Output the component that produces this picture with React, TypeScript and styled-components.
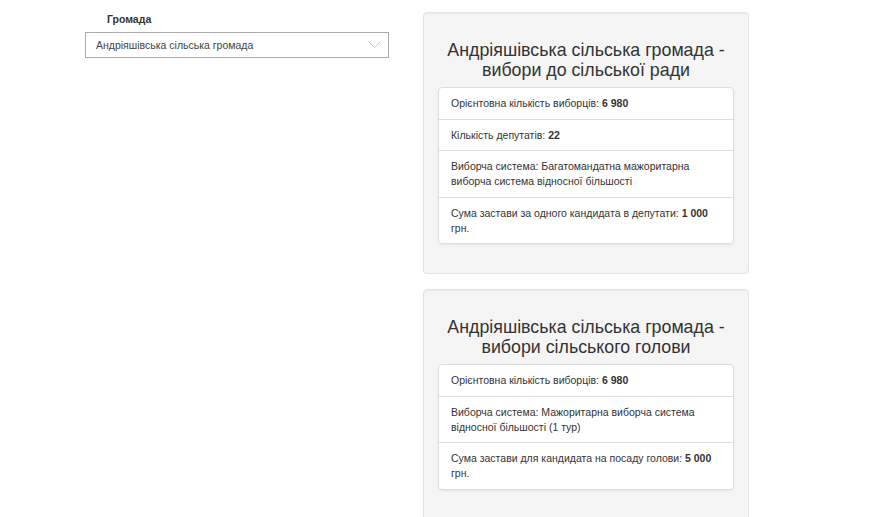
import styled, { createGlobalStyle } from 'styled-components';

interface Fact {
  label: string;
  value?: string;
  unit?: string;
}

interface Election {
  title: string;
  facts: Fact[];
}

const elections: Election[] = [
  {
    title: 'Андріяшівська сільська громада - вибори до сільської ради',
    facts: [
      { label: 'Орієнтовна кількість виборців: ', value: '6 980' },
      { label: 'Кількість депутатів: ', value: '22' },
      { label: 'Виборча система: Багатомандатна мажоритарна виборча система відносної більшості' },
      { label: 'Сума застави за одного кандидата в депутати: ', value: '1 000', unit: ' грн.' },
    ],
  },
  {
    title: 'Андріяшівська сільська громада - вибори сільського голови',
    facts: [
      { label: 'Орієнтовна кількість виборців: ', value: '6 980' },
      { label: 'Виборча система: Мажоритарна виборча система відносної більшості (1 тур)' },
      { label: 'Сума застави для кандидата на посаду голови: ', value: '5 000', unit: ' грн.' },
    ],
  },
];

const App = () => {
  return (
    <>
      <GlobalStyle />
      <PageStyle>
        <FilterStyle>
          <LabelStyle>Громада</LabelStyle>
          <SelectStyle>
            <span>Андріяшівська сільська громада</span>
            <svg width="13" height="8" viewBox="0 0 13 8">
              <path d="M0.5 0.5 L6.5 6.5 L12.5 0.5" fill="none" stroke="#c4c4c4" strokeWidth="1" />
            </svg>
          </SelectStyle>
        </FilterStyle>
        <CardsStyle>
          {elections.map((election) => (
            <WellStyle key={election.title}>
              <TitleStyle>{election.title}</TitleStyle>
              <ListStyle>
                {election.facts.map((fact) => (
                  <ItemStyle key={fact.label}>
                    {fact.label}
                    {fact.value && <b>{fact.value}</b>}
                    {fact.unit}
                  </ItemStyle>
                ))}
              </ListStyle>
            </WellStyle>
          ))}
        </CardsStyle>
      </PageStyle>
    </>
  );
};

const GlobalStyle = createGlobalStyle`
  body {
    margin: 0;
    background: #fff;
    font-family: 'Liberation Sans', Arial, sans-serif;
    color: #333;
  }
`;

const PageStyle = styled.div`
  display: grid;
  grid-template-columns: 304px 326px;
  column-gap: 34px;
  padding: 12px 0 0 85px;
  align-items: start;
`;

const FilterStyle = styled.div`
  display: flex;
  flex-direction: column;
`;

const LabelStyle = styled.label`
  font-size: 10.5px;
  font-weight: bold;
  line-height: 14px;
  padding-left: 22px;
  margin-bottom: 6px;
`;

const SelectStyle = styled.div`
  height: 26px;
  box-sizing: border-box;
  border: 1px solid #aaa;
  display: flex;
  align-items: center;
  justify-content: space-between;
  padding: 0 7px 0 10px;
  font-size: 10.5px;
  color: #444;
`;

const CardsStyle = styled.div`
  display: flex;
  flex-direction: column;
  gap: 15px;
`;

const WellStyle = styled.div`
  background: #f5f5f5;
  border: 1px solid #e3e3e3;
  border-radius: 4px;
  padding: 27px 14px 29px;
  box-shadow: inset 0 1px 1px rgba(0, 0, 0, 0.05);
`;

const TitleStyle = styled.h3`
  margin: 0 0 7px;
  font-size: 17.8px;
  font-weight: normal;
  line-height: 20px;
  text-align: center;
  color: #333;
`;

const ListStyle = styled.ul`
  list-style: none;
  margin: 0;
  padding: 0;
  background: #fff;
  border-radius: 4px;
  box-shadow: 0 1px 2px rgba(0, 0, 0, 0.08);
`;

const ItemStyle = styled.li`
  padding: 8px 12px 7.5px;
  font-size: 10.5px;
  line-height: 15px;
  color: #333;
  border: 1px solid #ddd;
  margin-bottom: -1px;

  &:first-child {
    border-radius: 4px 4px 0 0;
  }
  &:last-child {
    border-radius: 0 0 4px 4px;
    margin-bottom: 0;
  }

  b {
    font-weight: bold;
    line-height: 1;
  }
`;

export default App;
